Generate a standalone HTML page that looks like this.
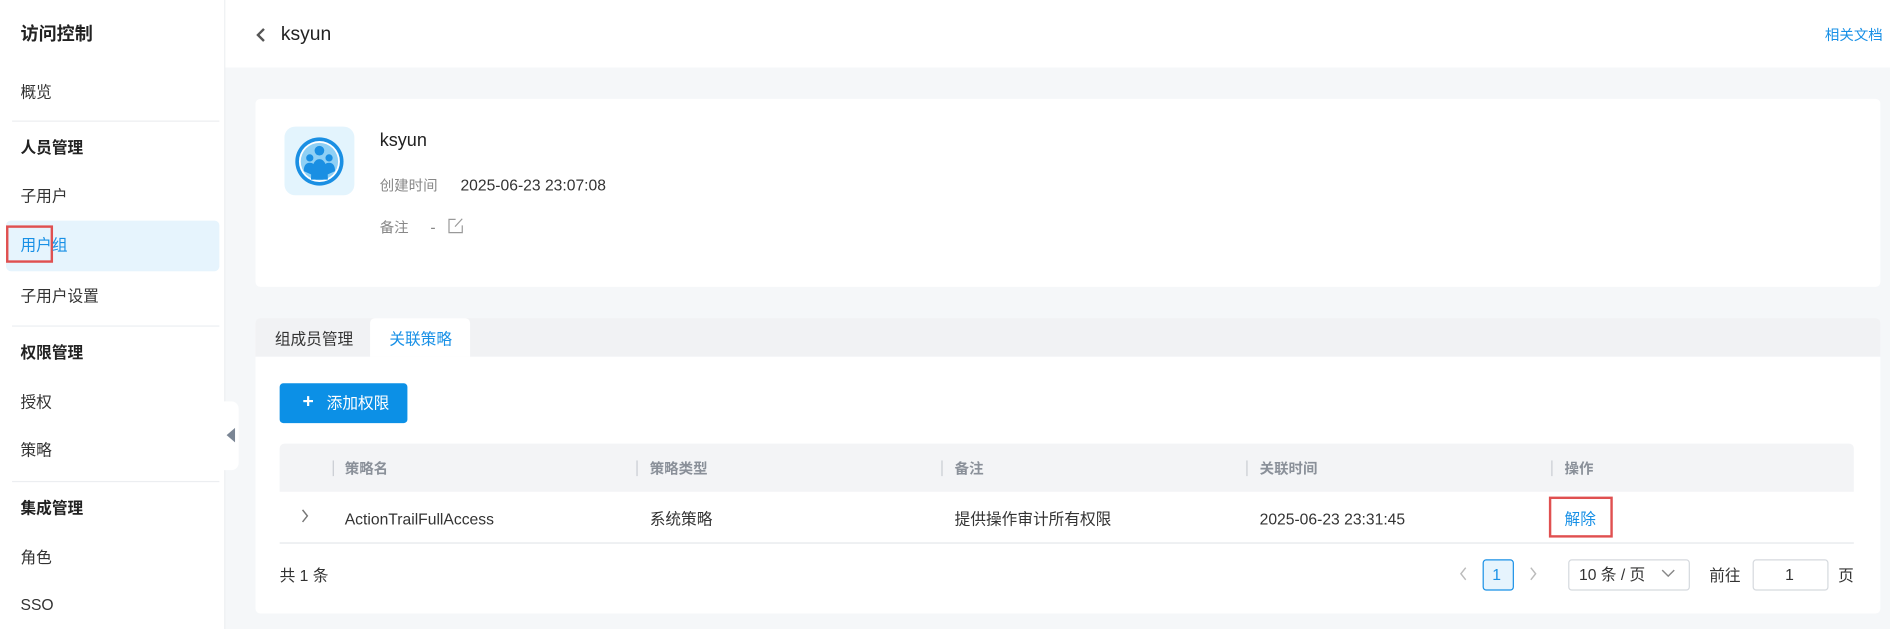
<!DOCTYPE html>
<html><head><meta charset="utf-8"><style>
html,body{margin:0;padding:0;width:1890px;height:629px;overflow:hidden;background:#f5f7f9}
#root{position:absolute;left:0;top:0;width:1568px;height:522px;transform:scale(1.20536);transform-origin:0 0;font-family:"Liberation Sans","Noto Sans CJK SC",sans-serif;color:#333;font-size:13px}
.a{position:absolute;white-space:nowrap;line-height:16px}
.side{position:absolute;left:0;top:0;width:186px;height:522px;background:#fff;border-right:1px solid #eceef1}
.hd{position:absolute;left:187px;top:0;width:1381px;height:56px;background:#fff}
.card{position:absolute;background:#fff;border-radius:4px}
.g{color:#888}
.th{color:#8a9099;font-weight:bold;font-size:12px}
.sep{position:absolute;width:1px;height:13px;background:#c8ccd2;top:382px}
.blue{color:#1890e6}
.div{position:absolute;left:10px;width:172px;height:1px;background:#eceef1}
</style></head><body><div id="root">
<div class="side">
 <div class="a" style="left:17px;top:21px;font-size:15px;font-weight:bold;color:#222">访问控制</div>
 <div class="a" style="left:17px;top:69px">概览</div>
 <div class="div" style="top:100px"></div>
 <div class="a" style="left:17px;top:115px;font-weight:bold;color:#222">人员管理</div>
 <div class="a" style="left:17px;top:155px">子用户</div>
 <div style="position:absolute;left:5px;top:183px;width:177px;height:42px;background:#e6f4fd;border-radius:4px"></div>
 <div style="position:absolute;left:5px;top:187px;width:35px;height:27px;border:2px solid #e05050"></div>
 <div class="a blue" style="left:17px;top:196px">用户组</div>
 <div class="a" style="left:17px;top:238px">子用户设置</div>
 <div class="div" style="top:270px"></div>
 <div class="a" style="left:17px;top:285px;font-weight:bold;color:#222">权限管理</div>
 <div class="a" style="left:17px;top:326px">授权</div>
 <div class="a" style="left:17px;top:366px">策略</div>
 <div class="div" style="top:399px"></div>
 <div class="a" style="left:17px;top:414px;font-weight:bold;color:#222">集成管理</div>
 <div class="a" style="left:17px;top:455px">角色</div>
 <div class="a" style="left:17px;top:494px">SSO</div>
</div>
<div style="position:absolute;left:183px;top:333px;width:15px;height:57px;background:#fff;border-radius:0 6px 6px 0"></div>
<div style="position:absolute;left:188px;top:355px;width:0;height:0;border-top:6px solid transparent;border-bottom:6px solid transparent;border-right:7px solid #7a8594"></div>
<div class="hd"></div>
<svg class="a" style="left:212px;top:22px" width="10" height="14"><path d="M7 2L2 7l5 5" fill="none" stroke="#555" stroke-width="2"/></svg>
<div class="a" style="left:233px;top:20px;font-size:16px;color:#222;line-height:18px">ksyun</div>
<div class="a blue" style="left:1514px;top:21px;font-size:12px">相关文档</div>

<div class="card" style="left:212px;top:82px;width:1348px;height:156px"></div>
<div style="position:absolute;left:236px;top:105px;width:58px;height:57px;background:#e3f4fd;border-radius:9px"></div>
<svg class="a" style="left:243px;top:112px" width="44" height="44" viewBox="0 0 44 44">
<circle cx="22" cy="22" r="20" fill="#1a8fe3"/><circle cx="22" cy="22" r="17" fill="#fff"/><circle cx="22" cy="22" r="15.5" fill="#8fd0f5"/>
<circle cx="22" cy="13" r="4" fill="#1a8fe3"/><circle cx="14" cy="19" r="3" fill="#1a8fe3"/><circle cx="30" cy="19" r="3" fill="#1a8fe3"/>
<path d="M9 30c0-5 2-7 5-7s4 2 4 4v7zM35 30c0-5-2-7-5-7s-4 2-4 4v7z" fill="#1a8fe3"/>
<path d="M15 37c0-12 3-17 7-17s7 5 7 17z" fill="#1a8fe3"/></svg>
<div class="a" style="left:315px;top:109px;font-size:15px;color:#222">ksyun</div>
<div class="a g" style="left:315px;top:146px;font-size:12px">创建时间</div>
<div class="a" style="left:382px;top:146px">2025-06-23 23:07:08</div>
<div class="a g" style="left:315px;top:181px;font-size:12px">备注</div>
<div class="a g" style="left:357px;top:181px">-</div>
<svg class="a" style="left:371px;top:180px" width="14" height="14"><path d="M7 2H1.5v11h11V7" fill="none" stroke="#999" stroke-width="1"/><path d="M12.5 1.5L6.5 8" stroke="#999" stroke-width="1"/></svg>

<div style="position:absolute;left:212px;top:264px;width:1348px;height:32px;background:#f1f2f4;border-radius:4px 4px 0 0"></div>
<div class="a" style="left:228px;top:274px;font-size:13px">组成员管理</div>
<div style="position:absolute;left:307px;top:264px;width:83px;height:32px;background:#fff;border-radius:4px 4px 0 0"></div>
<div class="a blue" style="left:323px;top:274px">关联策略</div>
<div class="card" style="left:212px;top:296px;width:1348px;height:213px;border-radius:0 0 4px 4px"></div>
<div style="position:absolute;left:232px;top:318px;width:106px;height:33px;background:#0c90e6;border-radius:3px"></div>
<div class="a" style="left:251px;top:326px;color:#fff;font-size:16px;font-weight:bold">+</div>
<div class="a" style="left:271px;top:327px;color:#fff">添加权限</div>

<div style="position:absolute;left:232px;top:368px;width:1306px;height:40px;background:#f3f4f6;border-radius:4px 4px 0 0"></div>
<div class="sep" style="left:276px"></div><div class="a th" style="left:286px;top:381px">策略名</div>
<div class="sep" style="left:528px"></div><div class="a th" style="left:539px;top:381px">策略类型</div>
<div class="sep" style="left:781px"></div><div class="a th" style="left:792px;top:381px">备注</div>
<div class="sep" style="left:1034px"></div><div class="a th" style="left:1045px;top:381px">关联时间</div>
<div class="sep" style="left:1287px"></div><div class="a th" style="left:1298px;top:381px">操作</div>
<div style="position:absolute;left:232px;top:450px;width:1306px;height:1px;background:#e4e7ea"></div>
<svg class="a" style="left:249px;top:422px" width="8" height="12"><path d="M2 1l4 5-4 5" fill="none" stroke="#777" stroke-width="1.2"/></svg>
<div class="a" style="left:286px;top:423px">ActionTrailFullAccess</div>
<div class="a" style="left:539px;top:423px">系统策略</div>
<div class="a" style="left:792px;top:423px">提供操作审计所有权限</div>
<div class="a" style="left:1045px;top:423px">2025-06-23 23:31:45</div>
<div style="position:absolute;left:1285px;top:412px;width:49px;height:30px;border:2px solid #e05050"></div>
<div class="a blue" style="left:1298px;top:423px">解除</div>

<div class="a" style="left:232px;top:470px">共 1 条</div>
<svg class="a" style="left:1210px;top:470px" width="8" height="12"><path d="M6 1L2 6l4 5" fill="none" stroke="#bbb" stroke-width="1.2"/></svg>
<div style="position:absolute;left:1230px;top:464px;width:24px;height:24px;background:#e6f4fd;border:1px solid #1890e6;border-radius:3px"></div>
<div class="a blue" style="left:1238px;top:469px">1</div>
<svg class="a" style="left:1268px;top:470px" width="8" height="12"><path d="M2 1l4 5-4 5" fill="none" stroke="#bbb" stroke-width="1.2"/></svg>
<div style="position:absolute;left:1301px;top:464px;width:99px;height:24px;border:1px solid #d5d9de;border-radius:3px;background:#fff"></div>
<div class="a" style="left:1310px;top:469px">10 条 / 页</div>
<svg class="a" style="left:1378px;top:472px" width="12" height="8"><path d="M1 1l5 5 5-5" fill="none" stroke="#888" stroke-width="1.2"/></svg>
<div class="a" style="left:1418px;top:470px">前往</div>
<div style="position:absolute;left:1454px;top:464px;width:61px;height:24px;border:1px solid #d5d9de;border-radius:3px;background:#fff"></div>
<div class="a" style="left:1481px;top:469px">1</div>
<div class="a" style="left:1525px;top:470px">页</div>
</div></body></html>
